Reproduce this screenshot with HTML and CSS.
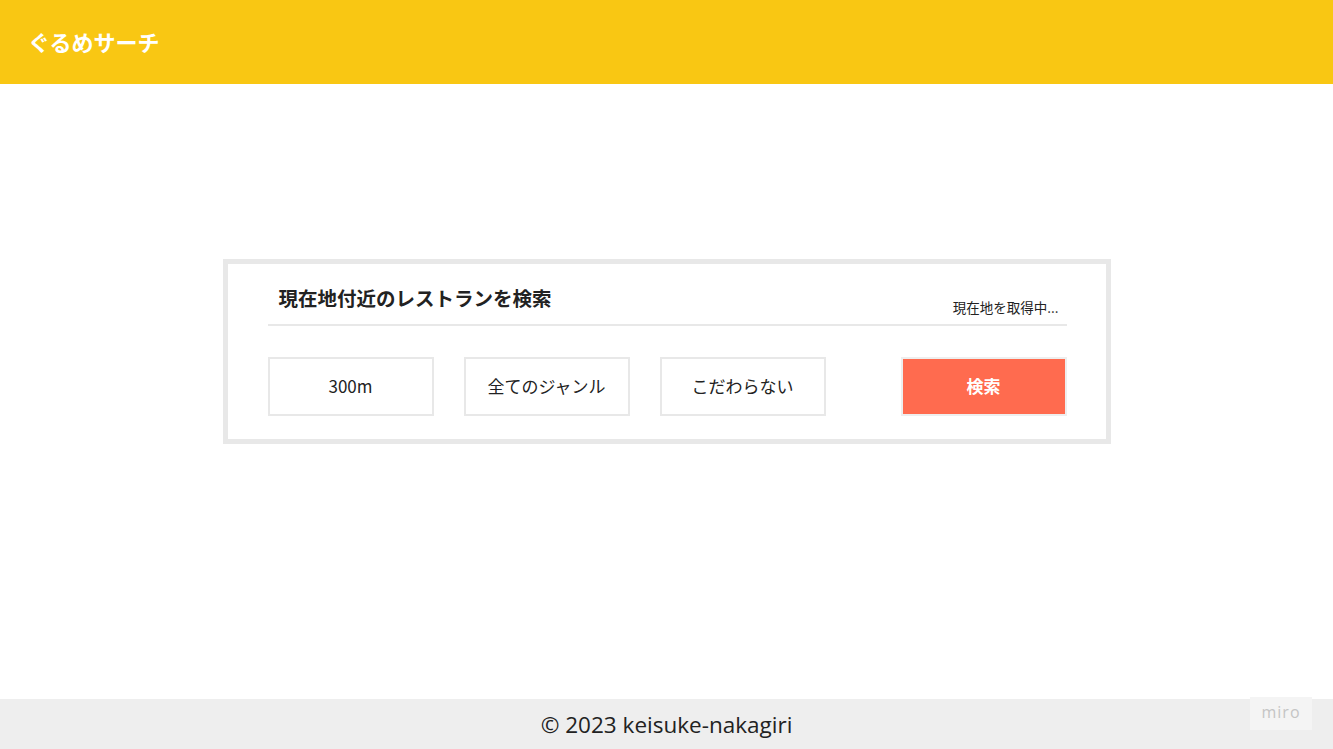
FILE: index.html
```html
<!DOCTYPE html>
<html lang="ja">
<head>
<meta charset="utf-8">
<title>ぐるめサーチ</title>
<link rel="stylesheet" href="styles.css">
</head>
<body>
<div class="page">
  <header class="header">
    <h1 class="logo">ぐるめサーチ</h1>
  </header>
  <main class="main">
    <section class="card">
      <div class="card-head">
        <h2 class="card-title">現在地付近のレストランを検索</h2>
        <span class="status">現在地を取得中...</span>
      </div>
      <div class="controls">
        <button class="opt">300m</button>
        <button class="opt">全てのジャンル</button>
        <button class="opt">こだわらない</button>
        <button class="search">検索</button>
      </div>
    </section>
  </main>
  <footer class="footer">
    <span class="copy">© 2023 keisuke-nakagiri</span>
    <span class="miro">miro</span>
  </footer>
</div>
</body>
</html>
```

FILE: styles.css
```css
* { box-sizing: border-box; }
html, body { margin: 0; padding: 0; }
body {
  font-family: "Noto Sans CJK JP", "Noto Sans", sans-serif;
  color: #222;
  background: #fff;
}
.page {
  height: 749px;
  display: flex;
  flex-direction: column;
}
.header {
  height: 84px;
  background: #f9c713;
  display: flex;
  align-items: center;
  padding-left: 28px;
  padding-bottom: 3px;
}
.logo {
  margin: 0;
  color: #fff;
  font-size: 22px;
  font-weight: 700;
  line-height: 30px;
}
.main {
  flex: 1;
  display: flex;
  justify-content: center;
  padding-top: 175px;
}
.card {
  width: 888px;
  height: 185px;
  border: 5px solid #e8e8e8;
  padding: 0 39px 0 40px;
}
.card-head {
  height: 62px;
  display: flex;
  align-items: flex-end;
  justify-content: space-between;
  border-bottom: 2px solid #e8e8e8;
  padding: 0 8px 8px 11px;
}
.card-title {
  margin: 0;
  font-size: 19.5px;
  font-weight: 700;
  line-height: 28px;
  margin-bottom: 4px;
}
.status {
  font-size: 13.5px;
  line-height: 18px;
}
.controls {
  display: flex;
  margin-top: 31px;
}
.opt, .search {
  width: 166px;
  height: 59px;
  border: 2px solid #e8e8e8;
  background: #fff;
  font-family: "Noto Sans CJK JP", "Noto Sans", sans-serif;
  font-size: 17px;
  color: #222;
  padding: 0 0 3px;
}
.opt + .opt { margin-left: 30px; }
.search {
  margin-left: auto;
  background: #ff6b4f;
  color: #fff;
  font-weight: 700;
  border-color: #eee;
}
.footer {
  height: 50px;
  background: #eeeeee;
  display: flex;
  align-items: center;
  justify-content: center;
  position: relative;
}
.copy {
  font-family: "Open Sans", sans-serif;
  font-size: 22.5px;
  color: #222;
}
.miro {
  position: absolute;
  right: 21px;
  top: -2px;
  width: 62px;
  height: 33px;
  background: #f4f4f4;
  color: #c4c4c4;
  font-family: "Open Sans", sans-serif;
  font-size: 16px;
  letter-spacing: 1px;
  text-align: center;
  line-height: 30px;
}
```
